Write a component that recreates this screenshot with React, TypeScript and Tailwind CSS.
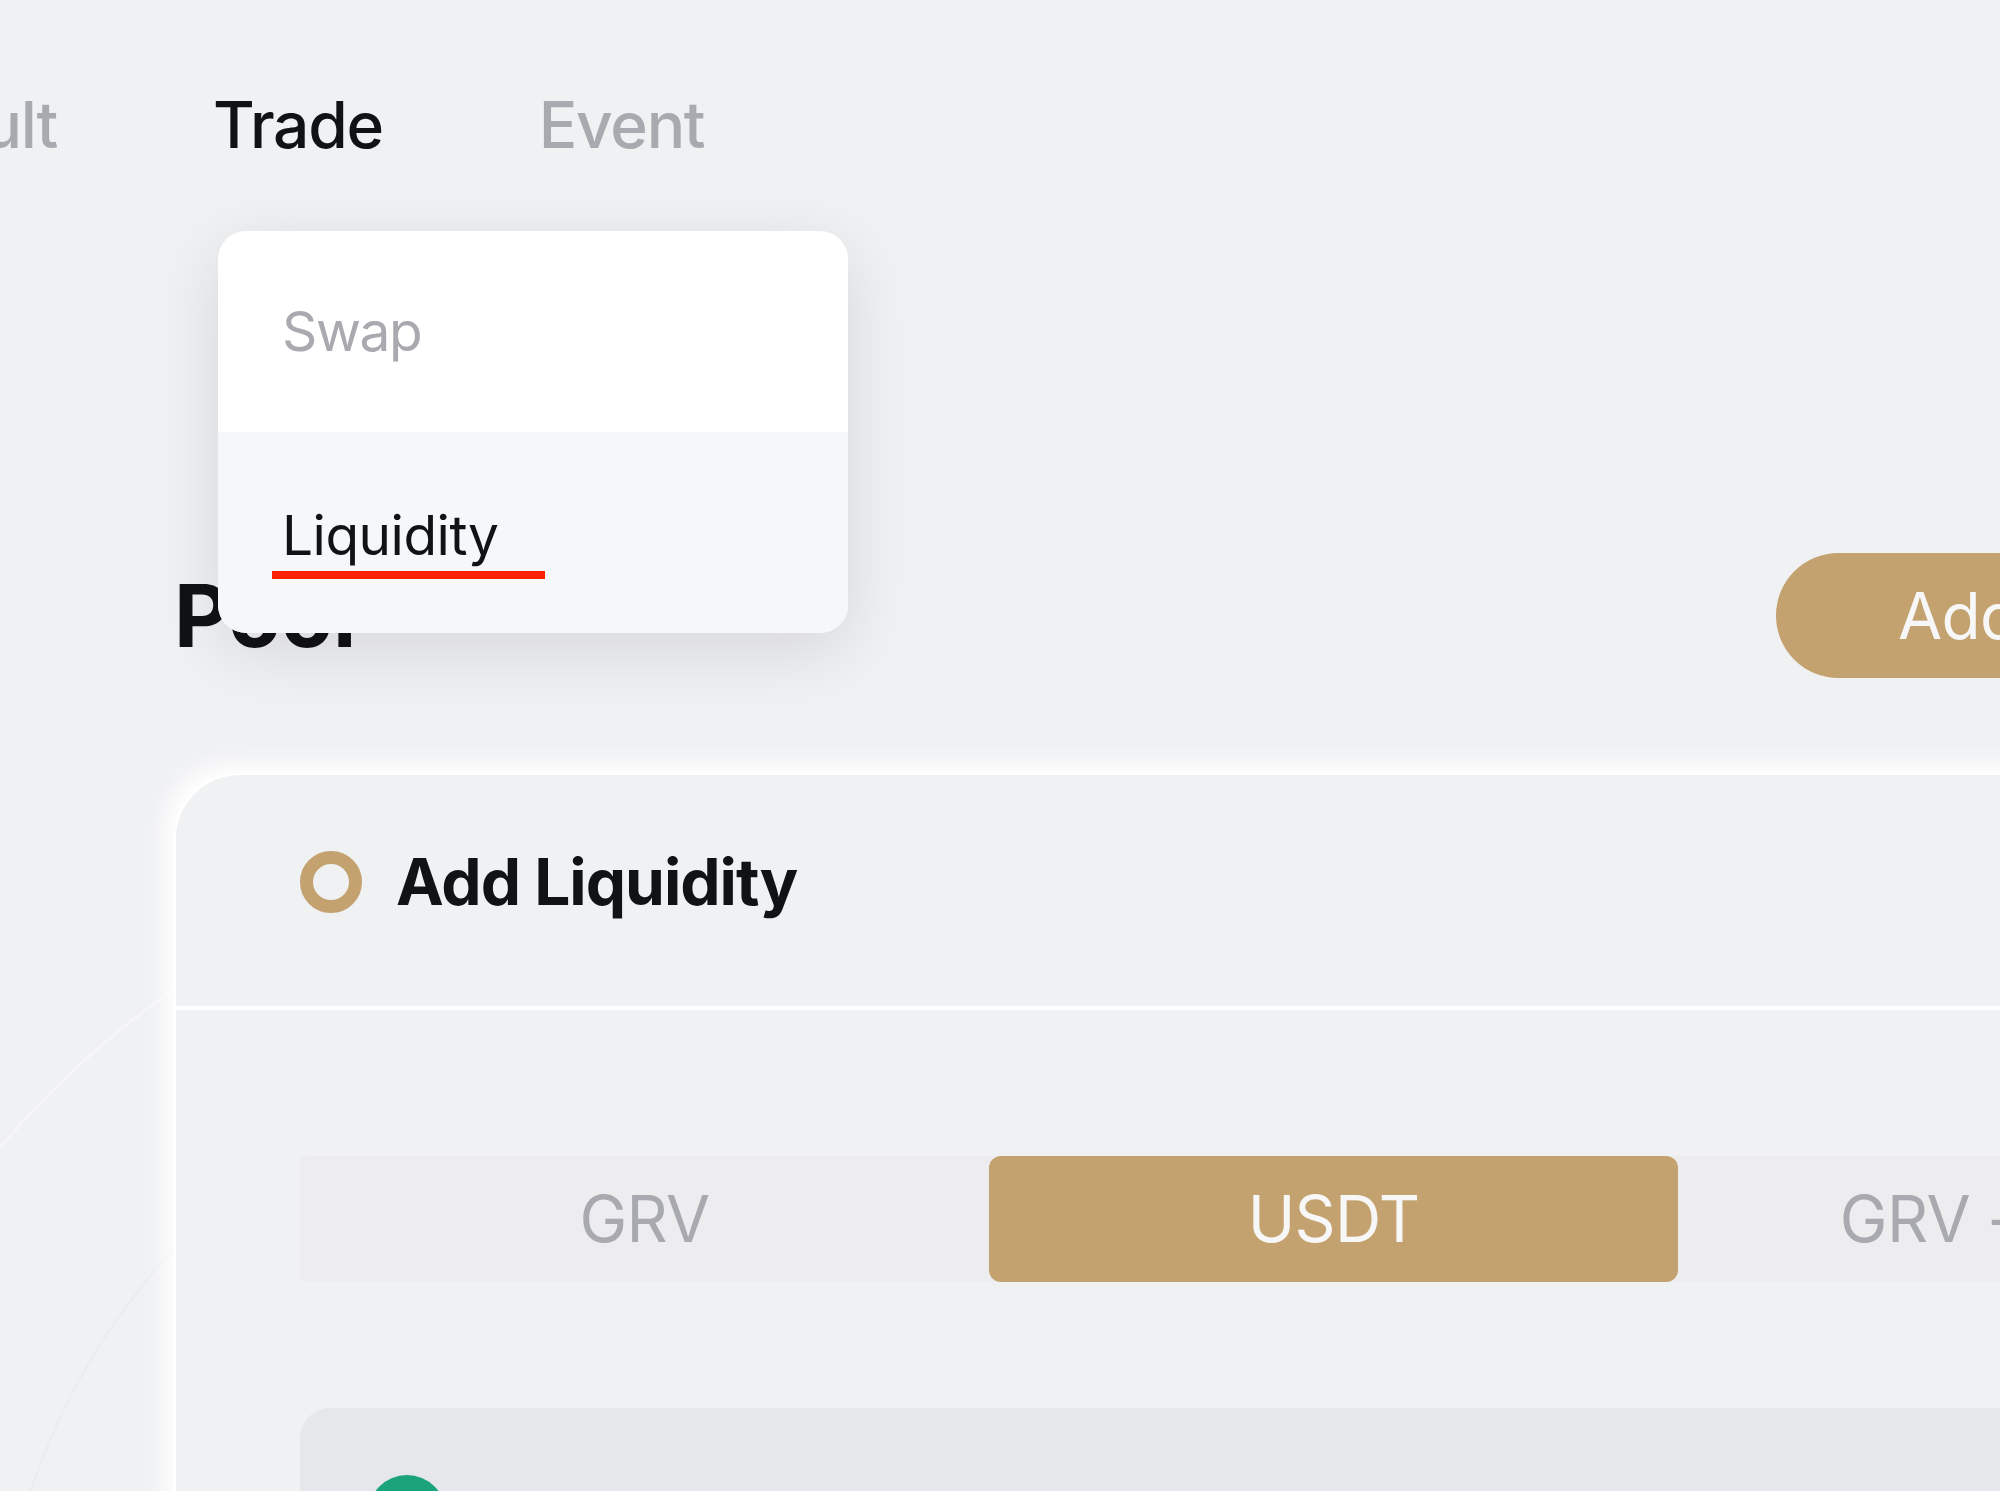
import React from "react";

export default function App() {
  return (
    <div
      className="relative w-[2000px] h-[1491px] overflow-hidden bg-[#f0f1f3] text-[#111214]"
      style={{ fontFamily: "Inter, 'Noto Sans', sans-serif" }}
    >
      {/* faint background arcs */}
      <div className="absolute left-[-202px] top-[838px] w-[1724px] h-[1724px] rounded-full border-[3px] border-white/40" />
      <div className="absolute left-[-4px] top-[1036px] w-[1328px] h-[1328px] rounded-full border-[2px] border-[#ebecef]" />

      <div className="relative pl-[174px]">
        {/* top navigation */}
        <nav className="flex items-start gap-[156px] pt-[93px] text-[64px] leading-[64px] font-medium tracking-[-0.02em] -ml-[174px]">
          <div className="w-[57px] overflow-hidden flex justify-end">
            <span className="whitespace-nowrap text-[#a9aaaf]">Vault</span>
          </div>
          <span className="text-[#111214]">Trade</span>
          <span className="text-[#a9aaaf]">Event</span>
        </nav>

        {/* Pool header */}
        <div className="grid grid-cols-[1602px_auto] items-center mt-[396px] h-[125px]">
          <h1 className="text-[86px] leading-[86px] font-bold tracking-[-0.5px]">Pool</h1>
          <button className="h-[125px] w-[600px] rounded-full bg-[#c4a26f] text-[#f7f7f7] text-[64px] leading-[64px] font-normal tracking-[-0.01em] text-left pl-[122px] whitespace-nowrap">
            Add Liquidity
          </button>
        </div>

        {/* Card */}
        <div className="mt-[95px] w-[2200px] h-[900px] rounded-[66px] bg-[#f0f1f3] border-t-2 border-l-2 border-white shadow-[-10px_-10px_22px_rgba(255,255,255,0.95)]">
          <div className="h-[231px] flex items-center pl-[124px] gap-[34px] pb-[18px]">
            <div className="w-[62px] h-[62px] rounded-full border-[13px] border-[#c4a26f]" />
            <span className="text-[64px] leading-[64px] font-bold tracking-[-1px]">Add Liquidity</span>
          </div>
          <div className="h-[4px] bg-white/95" />
          <div className="pl-[124px] pt-[146px]">
            <div className="flex w-[2070px] h-[126px] bg-[#ededf0] rounded-[6px] text-[64px] leading-[64px] tracking-[-0.01em]">
              <div className="w-[689px] h-full flex items-center justify-center text-[#a9aaaf]">
                GRV
              </div>
              <div className="w-[689px] h-full flex items-center justify-center rounded-[12px] bg-[#c4a26f] text-[#f7f7f7]">
                USDT
              </div>
              <div className="w-[689px] h-full flex items-center justify-center text-[#a9aaaf] whitespace-nowrap">
                GRV - USDT
              </div>
            </div>
            <div className="mt-[126px] w-[2070px] h-[300px] rounded-[30px] bg-[#e6e7ea] pl-[68px] pt-[67px]">
              <div className="w-[78px] h-[78px] rounded-full bg-[#1ba37b]" />
            </div>
          </div>
        </div>
      </div>

      {/* Dropdown menu */}
      <div className="absolute left-[218px] top-[231px] w-[630px] h-[402px] rounded-[28px] overflow-hidden bg-white shadow-[0_18px_70px_rgba(0,0,0,0.11)]">
        <div className="h-[201px] flex items-center pl-[64px] text-[55px] leading-[55px] tracking-[-0.025em] text-[#a9aaaf]">
          Swap
        </div>
        <div className="h-[201px] flex items-center pl-[64px] bg-[#f6f7f9] text-[55px] leading-[55px] tracking-[-0.5px] text-[#111214]">
          <span className="relative top-[3px]">Liquidity</span>
        </div>
      </div>
      <div className="absolute left-[272px] top-[571px] w-[273px] h-[8px] bg-[#ff2200]" />
    </div>
  );
}
